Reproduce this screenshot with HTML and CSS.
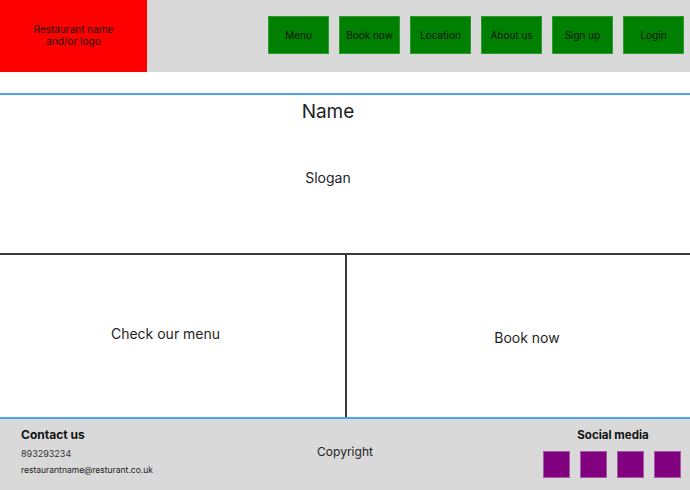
FILE: index.html
```html
<!DOCTYPE html>
<html lang="en">
<head>
<meta charset="utf-8">
<title>Restaurant</title>
<link rel="stylesheet" href="styles.css">
</head>
<body>
<header class="top">
  <div class="logo">Restaurant name<br>and/or logo</div>
  <nav class="nav">
    <a class="btn">Menu</a>
    <a class="btn">Book now</a>
    <a class="btn">Location</a>
    <a class="btn">About us</a>
    <a class="btn">Sign up</a>
    <a class="btn">Login</a>
  </nav>
</header>
<section class="hero">
  <h1 class="name">Name</h1>
  <p class="slogan">Slogan</p>
</section>
<section class="cards">
  <div class="card card-left"><span>Check our menu</span></div>
  <div class="card card-right"><span>Book now</span></div>
</section>
<footer class="foot">
  <div class="contact">
    <h2 class="contact-title">Contact us</h2>
    <p class="phone">893293234</p>
    <p class="email">restaurantname@resturant.co.uk</p>
  </div>
  <div class="copy">Copyright</div>
  <div class="social">
    <h2 class="social-title">Social media</h2>
    <div class="icons">
      <span class="sq"></span><span class="sq"></span><span class="sq"></span><span class="sq"></span>
    </div>
  </div>
</footer>
</body>
</html>
```
FILE: styles.css
```css
* { box-sizing: border-box; }
html, body { margin: 0; padding: 0; }
body {
  font-family: "Inter", "Inter Variable", "Noto Sans", sans-serif;
  color: #1e1e1e;
  background: #fff;
  width: 690px;
  height: 491px;
  overflow: hidden;
}
.top {
  height: 72px;
  background: #d9d9d9;
  display: flex;
}
.logo {
  width: 147px;
  background: #ff0000;
  display: flex;
  align-items: center;
  justify-content: center;
  text-align: center;
  font-size: 10px;
  line-height: 12px;
  color: #111;
  padding-bottom: 2px;
}
.nav {
  margin-left: auto;
  display: flex;
  gap: 10px;
  padding: 16px 6px 0 0;
  align-items: flex-start;
}
.btn {
  width: 61px;
  height: 38px;
  background: #008000;
  border: 1px solid #2f9b2f;
  display: flex;
  align-items: center;
  justify-content: center;
  font-size: 10px;
  color: #111;
}
.hero {
  margin-top: 21px;
  border-top: 2px solid #4aa6ee;
  height: 162px;
  border-bottom: 2px solid #3a3a3a;
  text-align: center;
  padding: 6px 34px 0 0;
}
.name {
  margin: 0;
  font-size: 19px;
  font-weight: 400;
  line-height: 22px;
}
.slogan {
  margin: 46px 0 0;
  font-size: 14px;
  line-height: 17px;
}
.cards {
  display: flex;
  height: 162px;
}
.card {
  display: flex;
  align-items: center;
  justify-content: center;
  font-size: 14px;
}
.card-left {
  width: 347px;
  border-right: 2px solid #3a3a3a;
  padding-bottom: 6px;
  padding-right: 14px;
}
.card-right {
  flex: 1;
  padding-top: 2px;
}
.card-right span { margin-left: 17px; }
.foot {
  border-top: 2px solid #4aa6ee;
  background: #d9d9d9;
  height: 73px;
  display: grid;
  grid-template-columns: 1fr auto 1fr;
}
.contact { padding: 8px 0 0 21px; }
.contact-title {
  margin: 0;
  font-size: 12px;
  font-weight: 700;
  line-height: 15px;
  color: #111;
}
.phone {
  margin: 6px 0 0;
  font-size: 9px;
  line-height: 11px;
  color: #333;
}
.email {
  margin: 6px 0 0;
  font-size: 8.5px;
  line-height: 11px;
  color: #222;
}
.copy {
  font-size: 12px;
  padding-top: 25px;
  color: #222;
}
.social {
  justify-self: end;
  padding: 9px 9px 0 0;
  width: 147px;
}
.social-title {
  margin: 0;
  text-align: center;
  font-size: 11.5px;
  font-weight: 700;
  line-height: 15px;
  padding-left: 2px;
  color: #111;
}
.icons {
  display: flex;
  gap: 10px;
  margin-top: 8px;
}
.sq {
  width: 27px;
  height: 27px;
  background: #800080;
  border: 1px solid #a35aa3;
}
```
